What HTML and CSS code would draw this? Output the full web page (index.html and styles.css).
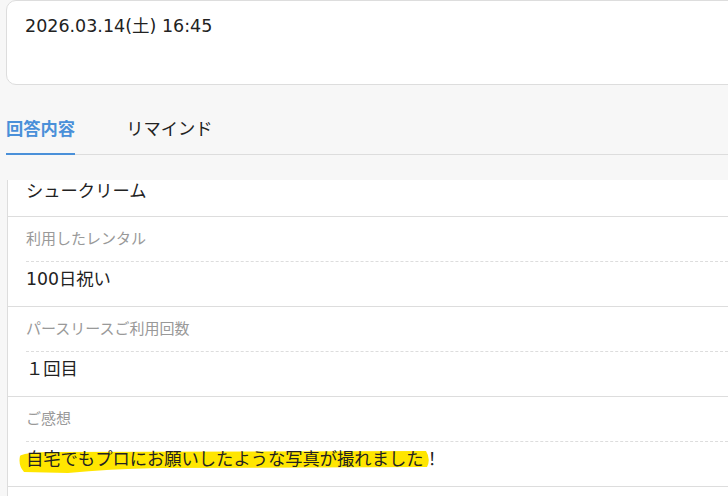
FILE: index.html
```html
<!DOCTYPE html>
<html lang="ja">
<head>
    <meta charset="utf-8">
    <title>回答内容</title>
    <link rel="stylesheet" href="styles.css">
</head>
<body>
    <div class="date-card">
        <p class="date-text">2026.03.14(土) 16:45</p>
    </div>

    <div class="tabs">
        <span class="tab active">回答内容</span>
        <span class="tab">リマインド</span>
    </div>

    <div class="answer-scroll">
        <div class="answer-item partial">
            <div class="answer-value">シュークリーム</div>
        </div>
        <div class="answer-item">
            <div class="answer-label">利用したレンタル</div>
            <div class="answer-value">100日祝い</div>
        </div>
        <div class="answer-item">
            <div class="answer-label">パースリースご利用回数</div>
            <div class="answer-value">１回目</div>
        </div>
        <div class="answer-item">
            <div class="answer-label">ご感想</div>
            <div class="answer-value"><span class="marker"><svg class="marker-stroke" width="414" height="28" viewBox="0 0 414 28"><path d="M2 9 Q4 6 30 5 L408 4 Q413 12 409 20 L140 21 Q90 22 50 26 L6 25 Q0 18 2 9 Z" fill="#ffe600"/></svg><span class="marker-text">自宅でもプロにお願いしたような写真が撮れました</span></span>！</div>
        </div>
    </div>
</body>
</html>
```

FILE: styles.css
```css
body {
    font-family: "DejaVu Sans", "Noto Sans CJK JP", sans-serif;
    background-color: #f7f7f7;
    color: #222;
    margin: 0;
    padding: 0;
    overflow: hidden;
    height: 496px;
}

.date-card {
    margin: 0 -20px 0 6px;
    height: 83px;
    background-color: #fff;
    border: 1px solid #ddd;
    border-radius: 10px;
    padding: 0 18px;
}

.date-text {
    margin: 12px 0 0;
    font-size: 17.5px;
    line-height: 26px;
}

.tabs {
    display: flex;
    margin-left: 6px;
    padding-top: 30px;
    border-bottom: 1px solid #ddd;
}

.tab {
    font-size: 17.3px;
    line-height: 28px;
    padding-bottom: 10px;
    margin-right: 51px;
    margin-bottom: -1px;
    border-bottom: 2px solid transparent;
}

.tab.active {
    color: #4a90d9;
    font-weight: bold;
    border-bottom-color: #4a90d9;
}

.answer-scroll {
    margin: 25px -20px 0 7px;
    height: 316px;
    overflow: hidden;
    background-color: #fff;
    border-left: 1px solid #ddd;
}

.answer-item {
    border-bottom: 1px solid #ddd;
}

.answer-label {
    margin: 0 0 0 18px;
    padding: 12px 0;
    font-size: 15px;
    line-height: 20px;
    color: #999;
    border-bottom: 1px dashed #ddd;
}

.answer-value {
    padding: 5px 18px 14px;
    font-size: 17.3px;
    line-height: 25px;
}

/* first row is scrolled up, only its value is left */
.answer-item.partial .answer-value {
    padding: 1px 18px 14px;
    line-height: 21px;
}

.marker {
    position: relative;
    display: inline-block;
}

.marker-stroke {
    position: absolute;
    left: -8px;
    top: 0;
}

.marker-text {
    position: relative;
}
```
